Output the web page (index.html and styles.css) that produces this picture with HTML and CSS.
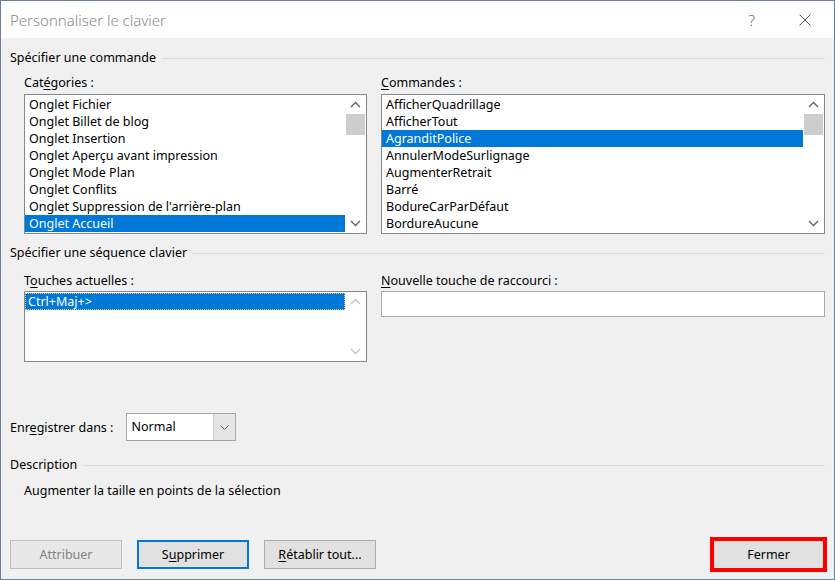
FILE: index.html
```html
<!DOCTYPE html>
<html lang="fr">
<head>
    <meta charset="UTF-8">
    <title>Personnaliser le clavier</title>
    <link rel="stylesheet" href="styles.css">
</head>
<body>
    <div class="window">
        <div class="titlebar">
            <span class="title">Personnaliser le clavier</span>
            <span class="tb-btn">?</span>
            <span class="tb-btn">
                <svg width="12" height="12" viewBox="0 0 12 12"><path d="M0.5 0.5 L11.5 11.5 M11.5 0.5 L0.5 11.5" stroke="#5a5a5a" stroke-width="1" fill="none"/></svg>
            </span>
        </div>

        <div class="content">
            <div class="legend legend-first"><span>Spécifier une commande</span></div>
            <div class="pair">
                <div class="col col-left">
                    <div class="label">Cat<u>é</u>gories :</div>
                    <div class="listbox list-tall">
                        <div class="items">
                            <div class="item">Onglet Fichier</div>
                            <div class="item">Onglet Billet de blog</div>
                            <div class="item">Onglet Insertion</div>
                            <div class="item">Onglet Aperçu avant impression</div>
                            <div class="item">Onglet Mode Plan</div>
                            <div class="item">Onglet Conflits</div>
                            <div class="item">Onglet Suppression de l'arrière-plan</div>
                            <div class="item selected">Onglet Accueil</div>
                        </div>
                        <div class="vscroll">
                            <svg class="arrow" width="11" height="7" viewBox="0 0 11 7"><polyline points="1,6 5.5,1.5 10,6" fill="none" stroke="#606060" stroke-width="1.3"/></svg>
                            <div class="track"><div class="thumb"></div></div>
                            <svg class="arrow" width="11" height="7" viewBox="0 0 11 7"><polyline points="1,1 5.5,5.5 10,1" fill="none" stroke="#606060" stroke-width="1.3"/></svg>
                        </div>
                    </div>
                </div>
                <div class="col col-right">
                    <div class="label"><u>C</u>ommandes :</div>
                    <div class="listbox list-tall">
                        <div class="items">
                            <div class="item">AfficherQuadrillage</div>
                            <div class="item">AfficherTout</div>
                            <div class="item selected">AgranditPolice</div>
                            <div class="item">AnnulerModeSurlignage</div>
                            <div class="item">AugmenterRetrait</div>
                            <div class="item">Barré</div>
                            <div class="item">BodureCarParDéfaut</div>
                            <div class="item">BordureAucune</div>
                        </div>
                        <div class="vscroll">
                            <svg class="arrow" width="11" height="7" viewBox="0 0 11 7"><polyline points="1,6 5.5,1.5 10,6" fill="none" stroke="#606060" stroke-width="1.3"/></svg>
                            <div class="track"><div class="thumb"></div></div>
                            <svg class="arrow" width="11" height="7" viewBox="0 0 11 7"><polyline points="1,1 5.5,5.5 10,1" fill="none" stroke="#606060" stroke-width="1.3"/></svg>
                        </div>
                    </div>
                </div>
            </div>

            <div class="legend legend-second"><span>Spécifier une séquence clavier</span></div>
            <div class="pair">
                <div class="col col-left">
                    <div class="label label-second">T<u>o</u>uches actuelles :</div>
                    <div class="listbox list-short">
                        <div class="items">
                            <div class="item selected focused">Ctrl+Maj+&gt;</div>
                        </div>
                        <div class="vscroll disabled">
                            <svg class="arrow" width="11" height="7" viewBox="0 0 11 7"><polyline points="1,6 5.5,1.5 10,6" fill="none" stroke="#c4c4c4" stroke-width="1.3"/></svg>
                            <div class="track"></div>
                            <svg class="arrow" width="11" height="7" viewBox="0 0 11 7"><polyline points="1,1 5.5,5.5 10,1" fill="none" stroke="#c4c4c4" stroke-width="1.3"/></svg>
                        </div>
                    </div>
                </div>
                <div class="col col-right">
                    <div class="label label-second"><u>N</u>ouvelle touche de raccourci :</div>
                    <div class="textbox"></div>
                </div>
            </div>

            <div class="save-row">
                <span>Enr<u>e</u>gistrer dans :</span>
                <div class="combo">
                    <span class="combo-value">Normal</span>
                    <span class="combo-btn">
                        <svg width="9" height="5" viewBox="0 0 9 5"><polyline points="0.5,0.5 4.5,4.5 8.5,0.5" fill="none" stroke="#606060" stroke-width="1"/></svg>
                    </span>
                </div>
            </div>

            <div class="legend legend-desc"><span>Description</span></div>
            <div class="desc-text">Augmenter la taille en points de la sélection</div>

            <div class="buttons">
                <div class="btn-group">
                    <button class="btn" disabled>Attribuer</button>
                    <button class="btn default">S<u>u</u>pprimer</button>
                    <button class="btn"><u>R</u>établir tout...</button>
                </div>
                <div class="highlight">
                    <button class="btn btn-close">Fermer</button>
                </div>
            </div>
        </div>
    </div>
</body>
</html>
```

FILE: styles.css
```css
body {
    margin: 0;
    background: #f0f0f0;
    font-family: 'Noto Sans', 'Segoe UI', sans-serif;
    font-size: 12.5px;
    color: #000;
}
.window {
    width: 835px;
    height: 580px;
    box-sizing: border-box;
    border: 1px solid #6b7f95;
    background: #f0f0f0;
    display: flex;
    flex-direction: column;
}
.titlebar {
    height: 37px;
    background: #fff;
    display: flex;
    align-items: center;
    padding-left: 9px;
    flex-shrink: 0;
}
.title {
    flex: 1;
    font-size: 15px;
    font-weight: 300;
    color: #8a8a8a;
}
.tb-btn {
    width: 46px;
    height: 37px;
    display: flex;
    align-items: center;
    justify-content: center;
    font-size: 15px;
    font-weight: 300;
    color: #6a6a6a;
}
.tb-btn:last-child {
    width: 59px;
}
.content {
    flex: 1;
    padding: 0 9px;
    display: flex;
    flex-direction: column;
}
u {
    text-decoration-thickness: 1px;
    text-underline-offset: 2px;
}

/* group headers with the thin line */
.legend {
    display: flex;
    align-items: center;
    gap: 6px;
    line-height: 16px;
}
.legend::after {
    content: '';
    flex: 1;
    height: 1px;
    background: #dcdcdc;
}
.legend-first {
    margin-top: 12px;
}
.legend-second {
    margin-top: 11px;
}
.legend-desc {
    margin-top: 16px;
}

.pair {
    display: flex;
    gap: 14px;
    padding-left: 14px;
}
.col-left {
    width: 343px;
}
.col-right {
    flex: 1;
}
.label {
    line-height: 16px;
    margin-top: 9px;
    margin-bottom: 3px;
}
.label-second {
    margin-top: 12px;
    margin-bottom: 2px;
}

/* list boxes */
.listbox {
    box-sizing: border-box;
    border: 1px solid #828790;
    background: #fff;
    display: flex;
    padding: 1px 0;
}
.list-tall {
    height: 140px;
}
.list-short {
    height: 71px;
}
.items {
    flex: 1;
    min-width: 0;
}
.item {
    box-sizing: border-box;
    height: 17px;
    line-height: 16px;
    padding: 1px 0 0 4px;
    white-space: nowrap;
}
.item.selected {
    background: #0078d7;
    color: #fff;
}
.item.focused {
    outline: 1px dotted #f0c070;
    outline-offset: -1px;
    padding-left: 3px;
}
.vscroll {
    width: 21px;
    display: flex;
    flex-direction: column;
    align-items: center;
}
.vscroll .arrow {
    margin: 5px 0;
}
.track {
    flex: 1;
    width: 100%;
}
.thumb {
    margin: 1px 1px 0;
    height: 21px;
    background: #cdcdcd;
}

.textbox {
    box-sizing: border-box;
    height: 26px;
    border: 1px solid #a9a9a9;
    background: #fff;
}

/* save location */
.save-row {
    display: flex;
    align-items: center;
    gap: 13px;
    margin-top: 51px;
}
.combo {
    box-sizing: border-box;
    width: 110px;
    height: 28px;
    border: 1px solid #a5a5a5;
    background: #fff;
    display: flex;
}
.combo-value {
    flex: 1;
    padding-left: 4px;
    line-height: 26px;
}
.combo-btn {
    width: 21px;
    background: #e5e5e5;
    border-left: 1px solid #c8c8c8;
    display: flex;
    align-items: center;
    justify-content: center;
}

.desc-text {
    line-height: 16px;
    margin-top: 10px;
    padding-left: 14px;
}

/* bottom buttons */
.buttons {
    margin-top: auto;
    margin-bottom: 7px;
    display: flex;
    justify-content: space-between;
    align-items: center;
}
.btn-group {
    display: flex;
    gap: 15px;
}
.btn {
    box-sizing: border-box;
    width: 112px;
    height: 29px;
    border: 1px solid #adadad;
    background: #e1e1e1;
    font-family: inherit;
    font-size: 12.5px;
    color: #000;
    padding: 0;
}
.btn:disabled {
    border-color: #bfbfbf;
    background: #e8e8e8;
    color: #838383;
}
.btn.default {
    border: 2px solid #0078d7;
}
.highlight {
    border: 4px solid #ff0000;
    margin-right: -2px;
}
.btn.btn-close {
    width: 109px;
    height: 27px;
    border: none;
}
```
